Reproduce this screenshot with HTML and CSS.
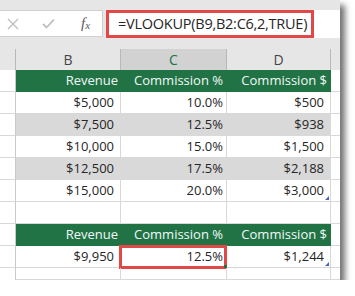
FILE: index.html
```html
<!DOCTYPE html>
<html>
<head>
<meta charset="utf-8">
<link rel="stylesheet" href="styles.css">
</head>
<body>
<div class="window">
  <div class="fbar">
    <div class="iconbox">
      <svg class="ico" width="12" height="12" viewBox="0 0 12 12"><path d="M1 1L11 11M11 1L1 11" stroke="#bfbfbf" stroke-width="1.4" fill="none"/></svg>
      <svg class="ico" width="13" height="11" viewBox="0 0 13 11"><path d="M1 6L4.5 9.5L12 1.5" stroke="#bfbfbf" stroke-width="1.8" fill="none"/></svg>
      <span class="fx"><i>f</i><sub>x</sub></span>
    </div>
    <div class="input"><div class="formula">=VLOOKUP(B9,B2:C6,2,TRUE)</div></div>
  </div>
  <div class="sheet">
    <div class="ch"></div><div class="ch">B</div><div class="ch sel">C</div><div class="ch">D</div><div class="ch last"></div>

    <div class="rh"></div><div class="c hd">Revenue</div><div class="c hd">Commission %</div><div class="c hd">Commission $</div><div class="c e"></div>
    <div class="rh"></div><div class="c m">$5,000</div><div class="c">10.0%</div><div class="c m">$500</div><div class="c e"></div>
    <div class="rh"></div><div class="c m band">$7,500</div><div class="c band">12.5%</div><div class="c m band">$938</div><div class="c e"></div>
    <div class="rh"></div><div class="c m">$10,000</div><div class="c">15.0%</div><div class="c m">$1,500</div><div class="c e"></div>
    <div class="rh"></div><div class="c m band">$12,500</div><div class="c band">17.5%</div><div class="c m band">$2,188</div><div class="c e"></div>
    <div class="rh"></div><div class="c m">$15,000</div><div class="c">20.0%</div><div class="c m tri">$3,000</div><div class="c e"></div>
    <div class="rh"></div><div class="c"></div><div class="c"></div><div class="c"></div><div class="c e"></div>
    <div class="rh"></div><div class="c hd">Revenue</div><div class="c hd">Commission %</div><div class="c hd">Commission $</div><div class="c e"></div>
    <div class="rh"></div><div class="c m">$9,950</div><div class="c active">12.5%</div><div class="c m tri">$1,244</div><div class="c e"></div>
    <div class="rh short"></div><div class="c short"></div><div class="c short"></div><div class="c short"></div><div class="c e short"></div>
  </div>
</div>
</body>
</html>
```
FILE: styles.css
```css
html, body {
  margin: 0;
  padding: 0;
  background: #ffffff;
}
body {
  font-family: "Open Sans", "Noto Sans", sans-serif;
}
.window {
  width: 340px;
  height: 280px;
  background: #e6e6e6;
  box-shadow: 5px 5px 6px rgba(0, 0, 0, 0.55);
  overflow: hidden;
}
.fbar {
  height: 49px;
  box-sizing: border-box;
  padding-top: 10px;
  display: flex;
  align-items: flex-start;
}
.iconbox {
  width: 103px;
  height: 27px;
  box-sizing: border-box;
  background: #ffffff;
  border: 1px solid #d0d0d0;
  border-left: none;
  display: flex;
  align-items: center;
  padding-left: 7px;
  gap: 23px;
}
.fx {
  font-family: "Liberation Serif", serif;
  color: #5a5a5a;
  font-size: 15px;
  line-height: 1;
  margin-left: 3px;
}
.fx sub {
  font-size: 11px;
  font-style: italic;
  vertical-align: -1px;
}
.input {
  margin-left: 3px;
  flex: 1;
  height: 28px;
  box-sizing: border-box;
  background: #ffffff;
}
.formula {
  width: 208px;
  height: 28px;
  box-sizing: border-box;
  border: 3px solid #e24848;
  padding-left: 9px;
  font-size: 14.5px;
  letter-spacing: -0.25px;
  line-height: 21px;
  color: #262626;
  white-space: nowrap;
}
.sheet {
  display: grid;
  grid-template-columns: 16px 105px 106px 104px 9px;
  grid-auto-rows: 22px;
  grid-template-rows: 21px;
  background: #ffffff;
  font-size: 13px;
  color: #262626;
}
.ch {
  background: #e6e6e6;
  border-right: 1px solid #b8b8b8;
  text-align: center;
  line-height: 21px;
  font-size: 14px;
  color: #444444;
}
.ch.sel {
  background: #d2d2d2;
  color: #217346;
}
.ch.last {
  border-right: none;
}
.rh {
  background: #ffffff;
  border-right: 1px solid #c8c8c8;
  border-bottom: 1px solid #d8d8d8;
}
.c {
  position: relative;
  box-sizing: border-box;
  border-right: 1px solid #d8d8d8;
  border-bottom: 1px solid #d8d8d8;
  text-align: right;
  padding-right: 3px;
  line-height: 21px;
  white-space: nowrap;
}
.c.m {
  padding-right: 6px;
}
.c.e {
  border-right: none;
}
.c.hd {
  background: #217346;
  border-color: #217346;
  color: #f2f9f6;
  padding-right: 2px;
}
.c.hd + .c.hd {
  padding-right: 3px;
}
.c.band {
  background: #d9d9d9;
  border-color: #d9d9d9;
}
.short {
  height: 12px;
}
.c.active::after {
  content: "";
  position: absolute;
  left: -2px;
  top: -1px;
  right: -1px;
  bottom: -2px;
  border: 3px solid #e24848;
}
.c.active::before {
  content: "";
  position: absolute;
  right: -1px;
  bottom: -1px;
  width: 3px;
  height: 3px;
  background: #217346;
  z-index: 2;
}
.c.tri::after {
  content: "";
  position: absolute;
  right: 1px;
  bottom: 1px;
  width: 0;
  height: 0;
  border-left: 4px solid transparent;
  border-bottom: 4px solid #4a62b8;
}
```
